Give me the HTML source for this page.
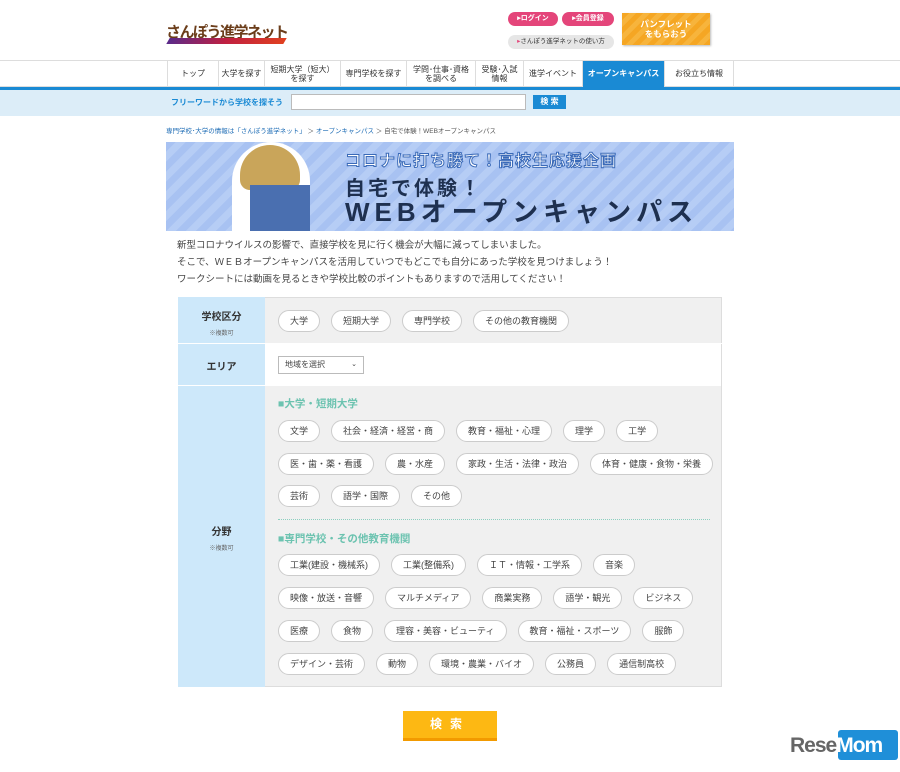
<!DOCTYPE html>
<html><head><meta charset="utf-8"><style>
*{margin:0;padding:0;box-sizing:border-box}
body{width:900px;height:772px;background:#fff;font-family:"Liberation Sans","Noto Sans CJK JP",sans-serif;color:#333;position:relative;overflow:hidden}
.a{position:absolute}
.nav{top:60px;left:0;width:900px;height:27px;border-top:1px solid #ddd;border-bottom:1px solid #ddd}
.nav div{position:absolute;top:0;height:26px;border-left:1px solid #ddd;font-size:8px;display:flex;align-items:center;justify-content:center;text-align:center;line-height:1.15;color:#333}
.pill{display:inline-block;height:22px;line-height:20px;border:1px solid #ccc;border-radius:11px;background:#fff;font-size:9px;padding:0 11px;margin-right:11px;color:#444;vertical-align:top}
.prow{position:absolute;left:278px;white-space:nowrap}
.lab{position:absolute;left:178px;width:87px;text-align:center;font-size:10px;font-weight:bold;color:#333}
.lab small{display:block;font-size:6px;font-weight:normal;color:#666;margin-top:5px}
.h{position:absolute;left:278px;font-size:10.5px;font-weight:bold;color:#6cc3b0}
</style></head><body>
<div class="a" style="left:166px;top:21px;font-size:15px;font-weight:bold;color:#6b3d1a;letter-spacing:-1.5px">さんぽう進学ネット</div>
<div class="a" style="left:168px;top:38px;width:117px;height:6px;background:linear-gradient(90deg,#5a2a8a,#c02040,#e04020);transform:skewX(-30deg)"></div>
<div class="a" style="left:508px;top:12px;width:50px;height:14px;border-radius:7px;background:#e4457a;color:#fff;font-size:7px;font-weight:bold;text-align:center;line-height:14px">▸ログイン</div>
<div class="a" style="left:562px;top:12px;width:52px;height:14px;border-radius:7px;background:#e4457a;color:#fff;font-size:7px;font-weight:bold;text-align:center;line-height:14px">▸会員登録</div>
<div class="a" style="left:508px;top:35px;width:106px;height:14px;border-radius:7px;background:#e6e6e6;color:#333;font-size:6.5px;text-align:center;line-height:14px"><span style="color:#e4457a">▸</span>さんぽう進学ネットの使い方</div>
<div class="a" style="left:622px;top:13px;width:88px;height:32px;background:repeating-linear-gradient(135deg,#f5a623 0 5px,#f7b43c 5px 10px);color:#fff;font-size:8.5px;font-weight:bold;text-align:center;line-height:10px;padding-top:6px;box-shadow:1px 1px 2px #bbb">パンフレット<br>をもらおう</div>
<div class="a nav">
<div style="left:167px;width:51px">トップ</div>
<div style="left:218px;width:46px">大学を探す</div>
<div style="left:264px;width:76px">短期大学（短大）<br>を探す</div>
<div style="left:340px;width:66px">専門学校を探す</div>
<div style="left:406px;width:69px">学問･仕事･資格<br>を調べる</div>
<div style="left:475px;width:48px">受験･入試<br>情報</div>
<div style="left:523px;width:59px">進学イベント</div>
<div style="left:582px;width:82px;background:#1a8ad4;color:#fff;font-weight:bold">オープンキャンパス</div>
<div style="left:664px;width:70px;border-right:1px solid #ddd">お役立ち情報</div>
</div>
<div class="a" style="top:87px;left:0;width:900px;height:3px;background:#1a8ad4"></div>
<div class="a" style="top:90px;left:0;width:900px;height:26px;background:#dcedf8"></div>
<div class="a" style="left:171px;top:97px;font-size:8px;font-weight:bold;color:#1a8ad4">フリーワードから学校を探そう</div>
<div class="a" style="left:291px;top:94px;width:235px;height:16px;background:#fff;border:1px solid #bbb"></div>
<div class="a" style="left:533px;top:95px;width:33px;height:14px;background:#1a8ad4;color:#fff;font-size:8px;font-weight:bold;text-align:center;line-height:14px">検 索</div>
<div class="a" style="left:166px;top:125px;font-size:6.5px;color:#555"><span style="color:#1a6ab4">専門学校･大学の情報は「さんぽう進学ネット」</span> ＞ <span style="color:#1a6ab4">オープンキャンパス</span> ＞ 自宅で体験！WEBオープンキャンパス</div>
<div class="a" style="left:166px;top:142px;width:568px;height:89px;background:repeating-linear-gradient(135deg,#a8c2f2 0 7px,#b6cdf5 7px 14px)"></div>
<div class="a" style="left:232px;top:142px;width:78px;height:89px;background:#fff;border-radius:40px 40px 0 0"></div>
<div class="a" style="left:240px;top:145px;width:60px;height:45px;background:#c9a55a;border-radius:30px 30px 10px 10px"></div>
<div class="a" style="left:250px;top:185px;width:60px;height:46px;background:#4a6fb0"></div>
<div class="a" style="left:345px;top:147px;font-size:16px;font-weight:bold;color:#fff;-webkit-text-stroke:1px #3a6ab8;letter-spacing:1px">コロナに打ち勝て！高校生応援企画</div>
<div class="a" style="left:345px;top:172px;font-size:20px;font-weight:bold;color:#1e3050;letter-spacing:3px">自宅で体験！</div>
<div class="a" style="left:345px;top:197px;font-size:26px;font-weight:bold;color:#1e3050;letter-spacing:5px;line-height:30px">WEBオープンキャンパス</div>
<div class="a" style="left:177px;top:237px;font-size:9.5px;line-height:17px;color:#444">新型コロナウイルスの影響で、直接学校を見に行く機会が大幅に減ってしまいました。<br>そこで、ＷＥＢオープンキャンパスを活用していつでもどこでも自分にあった学校を見つけましょう！<br>ワークシートには動画を見るときや学校比較のポイントもありますので活用してください！</div>
<div class="a" style="left:178px;top:297px;width:544px;height:390px;background:#f0f0f0;border:1px solid #ddd"></div>
<div class="a" style="left:178px;top:297px;width:87px;height:390px;background:#cde8fa"></div>
<div class="a" style="left:178px;top:343px;width:544px;height:1px;background:#fff"></div>
<div class="a" style="left:265px;top:344px;width:456px;height:42px;background:#fff"></div>
<div class="a" style="left:178px;top:385px;width:87px;height:1px;background:#fff"></div>
<div class="lab" style="top:308px">学校区分<small>※複数可</small></div>
<div class="lab" style="top:358px">エリア</div>
<div class="lab" style="top:523px">分野<small>※複数可</small></div>
<div class="prow" style="top:310px"><span class="pill">大学</span><span class="pill">短期大学</span><span class="pill">専門学校</span><span class="pill">その他の教育機関</span></div>
<div class="a" style="left:278px;top:356px;width:86px;height:18px;border:1px solid #bbb;background:#fff;font-size:8px;line-height:16px;padding-left:6px;color:#444">地域を選択<span style="position:absolute;right:6px;font-size:7px">⌄</span></div>
<div class="h" style="top:396px">■大学・短期大学</div>
<div class="prow" style="top:420px"><span class="pill">文学</span><span class="pill">社会・経済・経営・商</span><span class="pill">教育・福祉・心理</span><span class="pill">理学</span><span class="pill">工学</span></div>
<div class="prow" style="top:453px"><span class="pill">医・歯・薬・看護</span><span class="pill">農・水産</span><span class="pill">家政・生活・法律・政治</span><span class="pill">体育・健康・食物・栄養</span></div>
<div class="prow" style="top:485px"><span class="pill">芸術</span><span class="pill">語学・国際</span><span class="pill">その他</span></div>
<div class="a" style="left:278px;top:519px;width:432px;border-top:1px dotted #8ccfc0"></div>
<div class="h" style="top:531px">■専門学校・その他教育機関</div>
<div class="prow" style="top:554px"><span class="pill">工業(建設・機械系)</span><span class="pill">工業(整備系)</span><span class="pill">ＩＴ・情報・工学系</span><span class="pill">音楽</span></div>
<div class="prow" style="top:587px"><span class="pill">映像・放送・音響</span><span class="pill">マルチメディア</span><span class="pill">商業実務</span><span class="pill">語学・観光</span><span class="pill">ビジネス</span></div>
<div class="prow" style="top:620px"><span class="pill">医療</span><span class="pill">食物</span><span class="pill">理容・美容・ビューティ</span><span class="pill">教育・福祉・スポーツ</span><span class="pill">服飾</span></div>
<div class="prow" style="top:653px"><span class="pill">デザイン・芸術</span><span class="pill">動物</span><span class="pill">環境・農業・バイオ</span><span class="pill">公務員</span><span class="pill">通信制高校</span></div>
<div class="a" style="left:403px;top:711px;width:94px;height:30px;background:#fdb813;border-bottom:3px solid #f29a00;color:#fff;font-size:12px;font-weight:bold;text-align:center;line-height:27px;letter-spacing:8px">検索</div>
<div class="a" style="left:838px;top:730px;width:60px;height:30px;background:#1f8fd8;border-radius:3px"></div>
<div class="a" style="left:790px;top:734px;font-size:21px;font-weight:bold;color:#666;letter-spacing:-1px">Rese<span style="color:#fff">Mom</span></div>
</body></html>
